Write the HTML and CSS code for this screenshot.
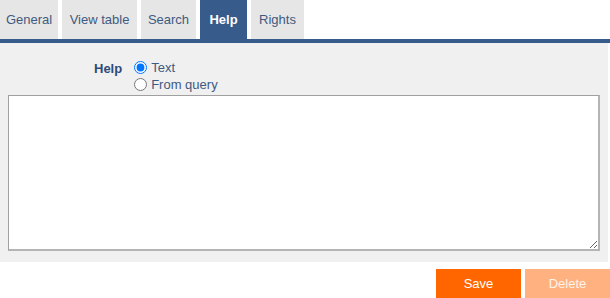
FILE: index.html
```html
<!DOCTYPE html>
<html>
<head>
<meta charset="utf-8">
<link rel="stylesheet" href="styles.css">
</head>
<body>
<div class="page">
  <nav class="tabs">
    <div class="tab">General</div>
    <div class="tab">View table</div>
    <div class="tab">Search</div>
    <div class="tab active">Help</div>
    <div class="tab">Rights</div>
  </nav>
  <div class="bar"></div>
  <section class="panel">
    <div class="field">
      <div class="label">Help</div>
      <div class="options">
        <label class="opt"><input type="radio" name="help" checked> Text</label>
        <label class="opt"><input type="radio" name="help"> From query</label>
      </div>
    </div>
    <textarea class="area"></textarea>
  </section>
  <div class="actions">
    <button class="btn save">Save</button>
    <button class="btn delete">Delete</button>
  </div>
</div>
</body>
</html>
```
FILE: styles.css
```css
html, body {
  margin: 0;
  padding: 0;
  background: #ffffff;
}
.page {
  width: 610px;
  font-family: "Liberation Sans", Arial, sans-serif;
  font-size: 13px;
}
.tabs {
  display: flex;
  gap: 4px;
  height: 39px;
}
.tab {
  background: #e6e6e6;
  color: #3f5a80;
  display: flex;
  align-items: center;
  justify-content: center;
  white-space: nowrap;
  height: 39px;
  padding-bottom: 1px;
  box-sizing: border-box;
}
.tab:nth-child(1) { width: 58px; }
.tab:nth-child(2) { width: 75px; }
.tab:nth-child(3) { width: 55px; }
.tab:nth-child(4) { width: 47px; }
.tab:nth-child(5) { width: 53px; }
.tab.active {
  background: #375b8b;
  color: #ffffff;
  font-weight: bold;
}
.bar {
  height: 4px;
  background: #375b8b;
}
.panel {
  background: #f0f0f0;
  width: 608px;
  padding: 16px 8px 11px 8px;
  box-sizing: border-box;
  display: flex;
  flex-direction: column;
  gap: 2px;
}
.field {
  display: flex;
  gap: 12px;
  padding-left: 86px;
}
.label {
  font-weight: bold;
  color: #2e4a78;
  padding-top: 2px;
}
.options {
  display: flex;
  flex-direction: column;
}
.opt {
  display: flex;
  align-items: center;
  gap: 4px;
  color: #3f5a80;
  height: 17px;
}
.opt input {
  margin: 0;
  width: 13px;
  height: 13px;
}
.area {
  display: block;
  width: 592px;
  height: 156px;
  margin: 0;
  box-sizing: border-box;
  background: #ffffff;
  border-style: solid;
  border-color: #a0a0a0 #b4b4b4 #b4b4b4 #a0a0a0;
  border-width: 1px 2px 2px 1px;
  resize: both;
}
.actions {
  display: flex;
  justify-content: flex-end;
  gap: 4px;
  padding: 7px 0 0 0;
}
.btn {
  width: 85px;
  height: 29px;
  border: 0;
  color: #ffffff;
  font-family: inherit;
  font-size: 13px;
}
.save { background: #ff6600; }
.delete { background: #ffb27f; color: #fff3ea; }
```
